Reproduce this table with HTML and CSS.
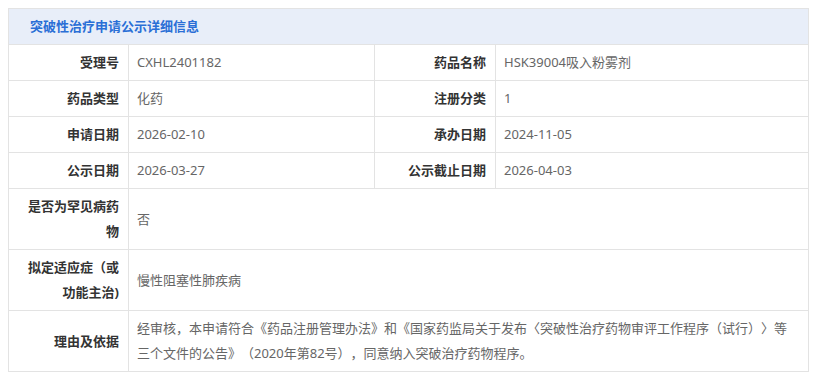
FILE: index.html
```html
<!DOCTYPE html>
<html lang="zh-CN">
<head>
<meta charset="utf-8">
<link rel="stylesheet" href="styles.css">
</head>
<body>
<table class="detail">
  <colgroup>
    <col class="c-label">
    <col class="c-value">
    <col class="c-label2">
    <col class="c-value2">
  </colgroup>
  <thead>
    <tr><th colspan="4" class="title">突破性治疗申请公示详细信息</th></tr>
  </thead>
  <tbody>
    <tr>
      <td class="label">受理号</td><td class="value">CXHL2401182</td>
      <td class="label">药品名称</td><td class="value">HSK39004吸入粉雾剂</td>
    </tr>
    <tr>
      <td class="label">药品类型</td><td class="value">化药</td>
      <td class="label">注册分类</td><td class="value">1</td>
    </tr>
    <tr>
      <td class="label">申请日期</td><td class="value">2026-02-10</td>
      <td class="label">承办日期</td><td class="value">2024-11-05</td>
    </tr>
    <tr>
      <td class="label">公示日期</td><td class="value">2026-03-27</td>
      <td class="label">公示截止日期</td><td class="value">2026-04-03</td>
    </tr>
    <tr>
      <td class="label">是否为罕见病药物</td><td class="value" colspan="3">否</td>
    </tr>
    <tr>
      <td class="label">拟定适应症（或功能主治)</td><td class="value" colspan="3">慢性阻塞性肺疾病</td>
    </tr>
    <tr>
      <td class="label">理由及依据</td><td class="value" colspan="3">经审核，本申请符合《药品注册管理办法》和《国家药监局关于发布〈突破性治疗药物审评工作程序（试行）〉等三个文件的公告》（2020年第82号），同意纳入突破治疗药物程序。</td>
    </tr>
  </tbody>
</table>
</body>
</html>
```
FILE: styles.css
```css
html, body {
  margin: 0;
  padding: 0;
  background: #ffffff;
}
body {
  padding: 8px;
  font-family: "Noto Sans", "Noto Sans CJK SC", sans-serif;
  font-size: 13px;
  text-spacing-trim: space-all;
}
.detail {
  width: 800px;
  border-collapse: collapse;
  table-layout: fixed;
}
.c-label { width: 120px; }
.c-value { width: 246px; }
.c-label2 { width: 121px; }
.c-value2 { width: 313px; }
.detail th,
.detail td {
  border: 1px solid #e3e3e3;
  line-height: 25px;
  padding: 5px 9px 5px 8px;
  vertical-align: middle;
}
.detail .title {
  background: #e8eef9;
  color: #2a6fd6;
  font-weight: bold;
  text-align: left;
  padding-left: 21px;
}
.detail .label {
  text-align: right;
  font-weight: bold;
  color: #333333;
  padding-right: 9px;
}
.detail .value {
  color: #666666;
  text-align: left;
}
```
